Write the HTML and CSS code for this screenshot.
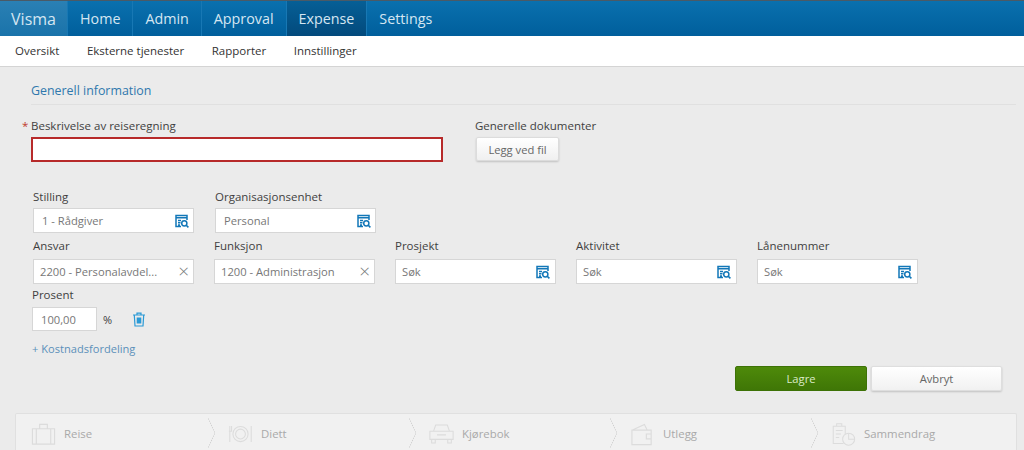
FILE: index.html
```html
<!DOCTYPE html>
<html lang="no">
<head>
  <meta charset="UTF-8" />
  <title>Visma Expense</title>
  <link rel="stylesheet" href="styles.css">
</head>
<body>

  <svg class="icon-defs" width="0" height="0">
    <symbol id="lookup" viewBox="0 0 14 14">
      <path d="M1 6V1.5h11V6M1 6v6.5h5M1 3.8h11M3 6.5h3M3 8.7h2.5M3 11h2" fill="none" stroke="currentColor" stroke-width="1.5"/>
      <circle cx="9.3" cy="9.3" r="2.6" fill="none" stroke="currentColor" stroke-width="1.5"/>
      <path d="M11.2 11.2l2.2 2.2" stroke="currentColor" stroke-width="1.6"/>
    </symbol>
  </svg>

  <nav class="topnav">
    <a class="brand">Visma</a>
    <a class="tab">Home</a>
    <a class="tab">Admin</a>
    <a class="tab">Approval</a>
    <a class="tab active">Expense</a>
    <a class="tab">Settings</a>
  </nav>

  <nav class="subnav">
    <a>Oversikt</a>
    <a>Eksterne tjenester</a>
    <a>Rapporter</a>
    <a>Innstillinger</a>
  </nav>

  <main class="content">
    <h2 class="section-title">Generell information</h2>

    <div class="general-row">
      <div class="desc-col">
        <label class="label required">Beskrivelse av reiseregning</label>
        <div class="desc-input"></div>
      </div>
      <div class="docs-col">
        <label class="label">Generelle dokumenter</label>
        <button class="btn attach">Legg ved fil</button>
      </div>
    </div>

    <div class="field-row first">
      <div class="field">
        <label class="label">Stilling</label>
        <div class="input"><span>1 - Rådgiver</span><svg class="lookup"><use href="#lookup"/></svg></div>
      </div>
      <div class="field org">
        <label class="label">Organisasjonsenhet</label>
        <div class="input"><span>Personal</span><svg class="lookup"><use href="#lookup"/></svg></div>
      </div>
    </div>

    <div class="field-row second">
      <div class="field">
        <label class="label">Ansvar</label>
        <div class="input"><span>2200 - Personalavdel...</span><i class="clear">&times;</i></div>
      </div>
      <div class="field">
        <label class="label">Funksjon</label>
        <div class="input"><span>1200 - Administrasjon</span><i class="clear">&times;</i></div>
      </div>
      <div class="field">
        <label class="label">Prosjekt</label>
        <div class="input"><span>Søk</span><svg class="lookup"><use href="#lookup"/></svg></div>
      </div>
      <div class="field">
        <label class="label">Aktivitet</label>
        <div class="input"><span>Søk</span><svg class="lookup"><use href="#lookup"/></svg></div>
      </div>
      <div class="field">
        <label class="label">Lånenummer</label>
        <div class="input"><span>Søk</span><svg class="lookup"><use href="#lookup"/></svg></div>
      </div>
    </div>

    <div class="percent">
      <label class="label">Prosent</label>
      <div class="percent-row">
        <div class="input percent-input"><span>100,00</span></div>
        <span class="percent-sign">%</span>
        <svg class="trash" viewBox="0 0 14 15">
          <path d="M1 3h12M5 3V1.2h4V3M2.3 3l.7 11h8l.7-11" fill="none" stroke="currentColor" stroke-width="1.2"/>
          <rect x="4.7" y="5.5" width="4.6" height="6" fill="currentColor"/>
        </svg>
      </div>
    </div>

    <a class="add-link">+ Kostnadsfordeling</a>

    <div class="actions">
      <button class="btn save">Lagre</button>
      <button class="btn cancel">Avbryt</button>
    </div>

    <div class="steps">
      <div class="step first-step">
        <svg class="step-icon" viewBox="0 0 26 24"><path d="M1.5 6.5h23v16h-23zM9 6.5V2h8v4.5M5.5 6.5v16M20.5 6.5v16"/></svg>
        <span>Reise</span>
      </div>
      <div class="step">
        <svg class="step-icon" viewBox="0 0 28 24"><circle cx="14" cy="12" r="8.5"/><circle cx="14" cy="12" r="5.5"/><path d="M2 3v18M4 3v6H1M26 3v18"/></svg>
        <span>Diett</span>
      </div>
      <div class="step">
        <svg class="step-icon" viewBox="0 0 28 24"><path d="M5 9l2.5-7h13L23 9M1 9h26v9H1zM3 18v4h4v-4M21 18v4h4v-4M9 13h10"/></svg>
        <span>Kjørebok</span>
      </div>
      <div class="step">
        <svg class="step-icon" viewBox="0 0 26 24"><path d="M2 8h20v15H2zM2 8l13-6 3 6M22 12h-5v5h5"/></svg>
        <span>Utlegg</span>
      </div>
      <div class="step">
        <svg class="step-icon" viewBox="0 0 28 28"><path d="M14 25H2V5h14v9M6 5V2h6v3M5 10h8M5 14h6M5 18h4"/><circle cx="20" cy="20" r="7"/><path d="M20 13v7h7" /></svg>
        <span>Sammendrag</span>
      </div>
    </div>
  </main>

</body>
</html>
```

FILE: styles.css
```css
html, body {
  height: 450px;
  overflow: hidden;
}

body {
  margin: 0;
  font-family: "Open Sans", sans-serif;
  font-size: 11.5px;
  color: #3c3c3c;
  background-color: #ebebeb;
}

.icon-defs {
  position: absolute;
}

/* top bar */
.topnav {
  display: flex;
  height: 35px;
  border-top: 1px solid #4a5a66;
  background: linear-gradient(to bottom, #0a70ae, #005f9c);
}

.topnav a {
  display: flex;
  align-items: center;
  justify-content: center;
  font-size: 14.3px;
  color: #d5e6f2;
  border-right: 1px solid #1878b4;
}

.topnav .brand {
  width: 67px;
  font-size: 16px;
  background: linear-gradient(to bottom, #2a80b4, #1a73aa);
}

.tab {
  padding: 0 12px;
}

.tab.active {
  background: linear-gradient(to bottom, #065f96, #024a7c);
}

.topnav .tab:last-child {
  border-right: none;
}

.subnav {
  display: flex;
  gap: 27.5px;
  box-sizing: border-box;
  height: 31px;
  align-items: center;
  padding: 0 0 2px 15px;
  background-color: #fff;
  border-bottom: 1px solid #d4d4d4;
  color: #333;
}

/* form */
.content {
  padding: 14px 8px 0 15px;
}

.section-title {
  margin: 0 0 0 16px;
  height: 23px;
  font-size: 12.4px;
  font-weight: 400;
  line-height: 20px;
  color: #2f78ad;
  border-bottom: 1px solid #e0e0e0;
}

.label {
  display: block;
  font-size: 11.5px;
  line-height: 17px;
  color: #3f3f3f;
}

.general-row {
  display: flex;
  margin: 12px 0 0 16px;
}

.desc-col {
  width: 445px;
}

.docs-col .label {
  margin-left: -1px;
}

.required {
  position: relative;
}

.required::before {
  content: "*";
  position: absolute;
  left: -9px;
  top: 0;
  color: #c0392b;
}

.desc-input {
  box-sizing: border-box;
  width: 412px;
  height: 25px;
  margin-top: 3px;
  background-color: #fff;
  border: 2px solid #b72a2a;
}

.btn {
  font-family: inherit;
  font-size: 11.2px;
  border-radius: 2px;
  cursor: pointer;
}

.attach {
  display: block;
  width: 83px;
  height: 24px;
  margin-top: 3px;
  padding: 0;
  color: #666;
  background: linear-gradient(to bottom, #fff, #f0f0f0);
  border: 1px solid #dcdcdc;
  box-shadow: 0 1px 2px rgba(0, 0, 0, 0.18);
}

.field-row {
  display: flex;
  gap: 20px;
}

.field-row.first {
  margin: 26px 0 0 18px;
}

.field-row.second {
  margin: 4px 0 0 18px;
}

.field {
  width: 161px;
}

.org {
  margin-left: 1px;
}

.input {
  box-sizing: border-box;
  display: flex;
  align-items: center;
  justify-content: space-between;
  height: 25px;
  padding: 0 4px 0 8px;
  margin-top: 3px;
  font-size: 11.2px;
  color: #777;
  background-color: #fff;
  border: 1px solid #d6d6d6;
}

.second .input {
  margin-top: 5px;
  padding: 0 5px 0 6px;
}

.lookup {
  width: 14px;
  height: 14px;
  color: #1277b8;
}

.clear {
  margin-right: -1px;
  font-style: normal;
  font-size: 19px;
  font-weight: 300;
  line-height: 1;
  color: #777;
}

.percent {
  margin: 2px 0 0 17px;
}

.percent-row {
  display: flex;
  align-items: center;
  margin-top: 4px;
}

.percent-row .input {
  margin-top: 0;
}

.percent-input {
  width: 65px;
  height: 24px;
}

.percent-sign {
  margin-left: 6px;
  font-size: 11px;
}

.trash {
  width: 14px;
  height: 15px;
  margin-left: 20px;
  color: #2a9ad6;
}

.add-link {
  display: block;
  margin: 9px 0 0 17px;
  font-size: 11.1px;
  line-height: 17px;
  color: #5b90ba;
}

.actions {
  display: flex;
  gap: 4px;
  margin: 9px 0 0 720px;
}

.save,
.cancel {
  width: 131px;
  height: 25px;
  padding: 0;
}

.save {
  width: 132px;
  color: #dcebc8;
  background: linear-gradient(to bottom, #4e8a0a, #3f7606);
  border: 1px solid #3d7206;
}

.cancel {
  color: #666;
  background: linear-gradient(to bottom, #fff, #f1f1f1);
  border: 1px solid #dedede;
  box-shadow: 0 1px 2px rgba(0, 0, 0, 0.18);
}

/* steps, cut off by the window like in the app */
.steps {
  display: flex;
  box-sizing: border-box;
  width: 1002px;
  height: 37px;
  margin-top: 22px;
  padding-top: 8px;
  background-color: #f1f1f1;
  border: 1px solid #e0e0e0;
  border-bottom: none;
  border-radius: 2px 2px 0 0;
  color: #a9a9a9;
  font-size: 11.4px;
}

.step {
  position: relative;
  display: flex;
  align-items: flex-start;
  gap: 8px;
  width: 201px;
  height: 28px;
  padding-left: 20px;
  box-sizing: border-box;
  line-height: 24px;
}

.first-step {
  width: 192px;
  padding-left: 15px;
}

.step:not(.first-step)::before {
  content: "";
  position: absolute;
  left: 0;
  top: -4px;
  width: 7px;
  height: 30px;
  background: linear-gradient(to top right, transparent 46%, #cfcfcf 50%, transparent 54%) top / 100% 50% no-repeat,
    linear-gradient(to bottom right, transparent 46%, #cfcfcf 50%, transparent 54%) bottom / 100% 50% no-repeat;
}

.step-icon {
  width: 25px;
  height: 24px;
  fill: none;
  stroke: #dcdcdc;
  stroke-width: 1.2;
}
```
